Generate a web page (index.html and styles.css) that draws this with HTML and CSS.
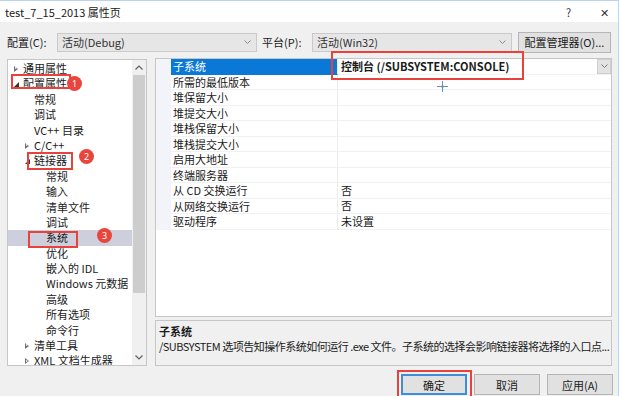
FILE: index.html
```html
<!DOCTYPE html>
<html lang="zh-CN">
<head>
    <meta charset="UTF-8">
    <title>test_7_15_2013 属性页</title>
    <link rel="stylesheet" href="styles.css">
</head>
<body>
<div class="window">
    <div class="titlebar">
        <span class="title">test_7_15_2013 属性页</span>
        <span class="help">?</span>
        <span class="close">✕</span>
    </div>

    <div class="config-row">
        <label class="config-label">配置(C):</label>
        <div class="combo">
            <span>活动(Debug)</span>
            <svg class="chev" width="7" height="4" viewBox="0 0 7 4"><path d="M0.5 0.5 L3.5 3.5 L6.5 0.5" fill="none" stroke="#8a8a8a" stroke-width="1"/></svg>
        </div>
        <label class="config-label platform">平台(P):</label>
        <div class="combo">
            <span>活动(Win32)</span>
            <svg class="chev" width="7" height="4" viewBox="0 0 7 4"><path d="M0.5 0.5 L3.5 3.5 L6.5 0.5" fill="none" stroke="#8a8a8a" stroke-width="1"/></svg>
        </div>
        <button class="btn manager">配置管理器(O)...</button>
    </div>

    <div class="main">
        <div class="tree">
            <ul class="tree-list">
                <li class="node lvl0"><span class="arrow closed"></span>通用属性</li>
                <li class="node lvl0"><span class="arrow open"></span>配置属性</li>
                <li class="node lvl1"><span class="arrow"></span>常规</li>
                <li class="node lvl1"><span class="arrow"></span>调试</li>
                <li class="node lvl1"><span class="arrow"></span>VC++ 目录</li>
                <li class="node lvl1"><span class="arrow closed"></span>C/C++</li>
                <li class="node lvl1"><span class="arrow open"></span>链接器</li>
                <li class="node lvl2"><span class="arrow"></span>常规</li>
                <li class="node lvl2"><span class="arrow"></span>输入</li>
                <li class="node lvl2"><span class="arrow"></span>清单文件</li>
                <li class="node lvl2"><span class="arrow"></span>调试</li>
                <li class="node lvl2 selected"><span class="arrow"></span>系统</li>
                <li class="node lvl2"><span class="arrow"></span>优化</li>
                <li class="node lvl2"><span class="arrow"></span>嵌入的 IDL</li>
                <li class="node lvl2"><span class="arrow"></span>Windows 元数据</li>
                <li class="node lvl2"><span class="arrow"></span>高级</li>
                <li class="node lvl2"><span class="arrow"></span>所有选项</li>
                <li class="node lvl2"><span class="arrow"></span>命令行</li>
                <li class="node lvl1"><span class="arrow closed"></span>清单工具</li>
                <li class="node lvl1"><span class="arrow closed"></span>XML 文档生成器</li>
            </ul>
            <div class="scrollbar">
                <svg class="scroll-arrow" width="8" height="5" viewBox="0 0 8 5"><path d="M0.5 4.5 L4 1 L7.5 4.5" fill="none" stroke="#606060" stroke-width="1.2"/></svg>
                <div class="scroll-track"><div class="scroll-thumb"></div></div>
                <svg class="scroll-arrow" width="8" height="5" viewBox="0 0 8 5"><path d="M0.5 0.5 L4 4 L7.5 0.5" fill="none" stroke="#606060" stroke-width="1.2"/></svg>
            </div>
        </div>

        <div class="right">
            <div class="grid">
                <div class="row">
                    <div class="gutter"></div>
                    <div class="name active">子系统</div>
                    <div class="value strong">控制台 (/SUBSYSTEM:CONSOLE)
                        <span class="drop"><svg width="7" height="4" viewBox="0 0 7 4"><path d="M0.5 0.5 L3.5 3.5 L6.5 0.5" fill="none" stroke="#7a7a7a" stroke-width="1"/></svg></span>
                    </div>
                </div>
                <div class="row"><div class="gutter"></div><div class="name">所需的最低版本</div><div class="value"></div></div>
                <div class="row"><div class="gutter"></div><div class="name">堆保留大小</div><div class="value"></div></div>
                <div class="row"><div class="gutter"></div><div class="name">堆提交大小</div><div class="value"></div></div>
                <div class="row"><div class="gutter"></div><div class="name">堆栈保留大小</div><div class="value"></div></div>
                <div class="row"><div class="gutter"></div><div class="name">堆栈提交大小</div><div class="value"></div></div>
                <div class="row"><div class="gutter"></div><div class="name">启用大地址</div><div class="value"></div></div>
                <div class="row"><div class="gutter"></div><div class="name">终端服务器</div><div class="value"></div></div>
                <div class="row"><div class="gutter"></div><div class="name">从 CD 交换运行</div><div class="value">否</div></div>
                <div class="row"><div class="gutter"></div><div class="name">从网络交换运行</div><div class="value">否</div></div>
                <div class="row"><div class="gutter"></div><div class="name">驱动程序</div><div class="value">未设置</div></div>
            </div>
            <div class="desc">
                <div class="desc-title">子系统</div>
                <div class="desc-text">/SUBSYSTEM 选项告知操作系统如何运行 .exe 文件。子系统的选择会影响链接器将选择的入口点...</div>
            </div>
        </div>
    </div>

    <div class="buttons">
        <button class="btn ok">确定</button>
        <button class="btn">取消</button>
        <button class="btn">应用(A)</button>
    </div>

    <!-- annotations drawn over the dialog -->
    <div class="mark box1"></div>
    <div class="badge b1">1</div>
    <div class="mark box2"></div>
    <div class="badge b2">2</div>
    <div class="mark box3"></div>
    <div class="badge b3">3</div>
    <div class="mark box-value"></div>
    <div class="mark box-ok"></div>
    <svg class="cursor" width="11" height="11" viewBox="0 0 11 11"><path d="M5.5 0 V11 M0 5.5 H11" stroke="#6b8fb8" stroke-width="1"/><circle cx="5.5" cy="5.5" r="1.3" fill="#6b8fb8"/></svg>
</div>
</body>
</html>
```

FILE: styles.css
```css
* {
    box-sizing: border-box;
}

body {
    margin: 0;
    font-family: "Noto Sans CJK SC", "Noto Sans", sans-serif;
    font-size: 11px;
    color: #1a1a1a;
}

.window {
    position: relative;
    width: 619px;
    height: 396px;
    overflow: hidden;
    background-color: #f0f0f0;
    border-top: 1px solid #b9d4ec;
    border-right: 1px solid #b9d4ec;
}

.titlebar {
    height: 21px;
    background-color: #fff;
    display: flex;
    align-items: center;
    padding-left: 5px;
}

.titlebar .title {
    flex-grow: 1;
    font-size: 11px;
}

.titlebar .help {
    width: 34px;
    font-size: 11px;
    color: #333;
}

.titlebar .close {
    width: 18px;
    font-size: 11px;
    color: #333;
}

/* config row */
.config-row {
    display: flex;
    align-items: center;
    height: 22px;
    margin-top: 9px;
    padding-left: 7px;
}

.config-label {
    width: 50px;
    font-size: 11px;
}

.config-label.platform {
    margin-left: 5px;
}

.combo {
    width: 200px;
    height: 19px;
    background-color: #e6e6e6;
    border: 1px solid #cacaca;
    display: flex;
    align-items: center;
    justify-content: space-between;
    padding: 0 5px 0 4px;
    color: #333;
}

.btn {
    font-family: inherit;
    font-size: 11px;
    color: #1a1a1a;
    background-color: #e1e1e1;
    border: 1px solid #b5b5b5;
    padding: 0;
    height: 21px;
}

.btn.manager {
    width: 93px;
    margin-left: 6px;
}

/* main panels */
.main {
    display: flex;
    margin-top: 6px;
    padding-left: 7px;
    height: 307px;
}

.tree {
    width: 140px;
    height: 307px;
    background-color: #fff;
    border: 1px solid #c6c6c6;
    display: flex;
}

.tree-list {
    list-style: none;
    margin: 0;
    padding: 1px 0 0 0;
    flex-grow: 1;
    overflow: hidden;
}

.node {
    height: 15.4px;
    line-height: 15.4px;
    display: flex;
    align-items: center;
    white-space: nowrap;
}

.node.lvl0 { padding-left: 5px; }
.node.lvl1 { padding-left: 16px; }
.node.lvl2 { padding-left: 28px; }

.node.selected {
    background-color: #cdd0dc;
}

.arrow {
    width: 10px;
    height: 8px;
    position: relative;
    flex-shrink: 0;
}

.arrow.closed::before {
    content: "";
    position: absolute;
    left: 1px;
    top: 1px;
    border-left: 4px solid #707070;
    border-top: 3px solid transparent;
    border-bottom: 3px solid transparent;
}

.arrow.closed::after {
    content: "";
    position: absolute;
    left: 2px;
    top: 2.5px;
    border-left: 2px solid #fff;
    border-top: 1.5px solid transparent;
    border-bottom: 1.5px solid transparent;
}

.arrow.open::before {
    content: "";
    position: absolute;
    left: 1px;
    top: 2px;
    border-right: 5px solid #333;
    border-top: 5px solid transparent;
}

.scrollbar {
    width: 14px;
    background-color: #f0f0f0;
    display: flex;
    flex-direction: column;
    align-items: center;
}

.scroll-arrow {
    margin: 5px 0;
}

.scroll-track {
    flex-grow: 1;
    width: 100%;
    padding: 0 1px;
}

.scroll-thumb {
    height: 218px;
    background-color: #cdcdcd;
}

.right {
    width: 457px;
    margin-left: 8px;
    display: flex;
    flex-direction: column;
}

.grid {
    height: 260px;
    margin-top: -1px;
    background-color: #fff;
    border: 1px solid #c6c6c6;
}

.row {
    display: flex;
    height: 15.5px;
}

.gutter {
    width: 15px;
    background-color: #f3f4f9;
}

.name {
    width: 167px;
    padding-left: 2px;
    line-height: 15px;
    border-bottom: 1px solid #f1f1f1;
    border-right: 1px solid #ececec;
    white-space: nowrap;
}

.name.active {
    background-color: #0a78d7;
    color: #fff;
    border-bottom-color: #0a78d7;
}

.value {
    flex-grow: 1;
    padding-left: 3px;
    line-height: 15px;
    border-bottom: 1px solid #f1f1f1;
    display: flex;
    align-items: center;
    justify-content: space-between;
    white-space: nowrap;
}

.value.strong {
    font-weight: bold;
}

.drop {
    width: 14px;
    height: 15px;
    background-color: #e3e3e3;
    border: 1px solid #cfcfcf;
    display: flex;
    align-items: center;
    justify-content: center;
}

.desc {
    height: 46px;
    margin-top: 3px;
    border: 1px solid #c6c6c6;
    padding: 2px 3px 0 3px;
    line-height: 16px;
}

.desc-title {
    font-weight: bold;
    height: 15px;
}

.desc-text {
    white-space: nowrap;
    letter-spacing: -0.5px;
}

/* dialog buttons */
.buttons {
    display: flex;
    justify-content: flex-end;
    gap: 7px;
    margin-top: 8px;
    padding-right: 5px;
}

.buttons .btn {
    width: 66px;
}

.buttons .btn.ok {
    border: 2px solid #3c8fd6;
}

/* annotations */
.mark {
    position: absolute;
    border: 2px solid #e8423c;
}

.box1 { left: 11px; top: 73px; width: 60px; height: 15px; }
.box2 { left: 27px; top: 151px; width: 46px; height: 18px; }
.box3 { left: 28px; top: 230px; width: 50px; height: 17px; }
.box-value { left: 331px; top: 50px; width: 193px; height: 29px; }
.box-ok { left: 397px; top: 369px; width: 75px; height: 32px; }

.badge {
    position: absolute;
    width: 15px;
    height: 15px;
    border-radius: 50%;
    background-color: #e8453c;
    color: #fff;
    font-size: 9px;
    line-height: 15px;
    text-align: center;
    font-family: "Noto Sans", sans-serif;
}

.b1 { left: 67px; top: 75px; }
.b2 { left: 79px; top: 148px; }
.b3 { left: 97px; top: 227px; }

.cursor {
    position: absolute;
    left: 437px;
    top: 80px;
}
```
